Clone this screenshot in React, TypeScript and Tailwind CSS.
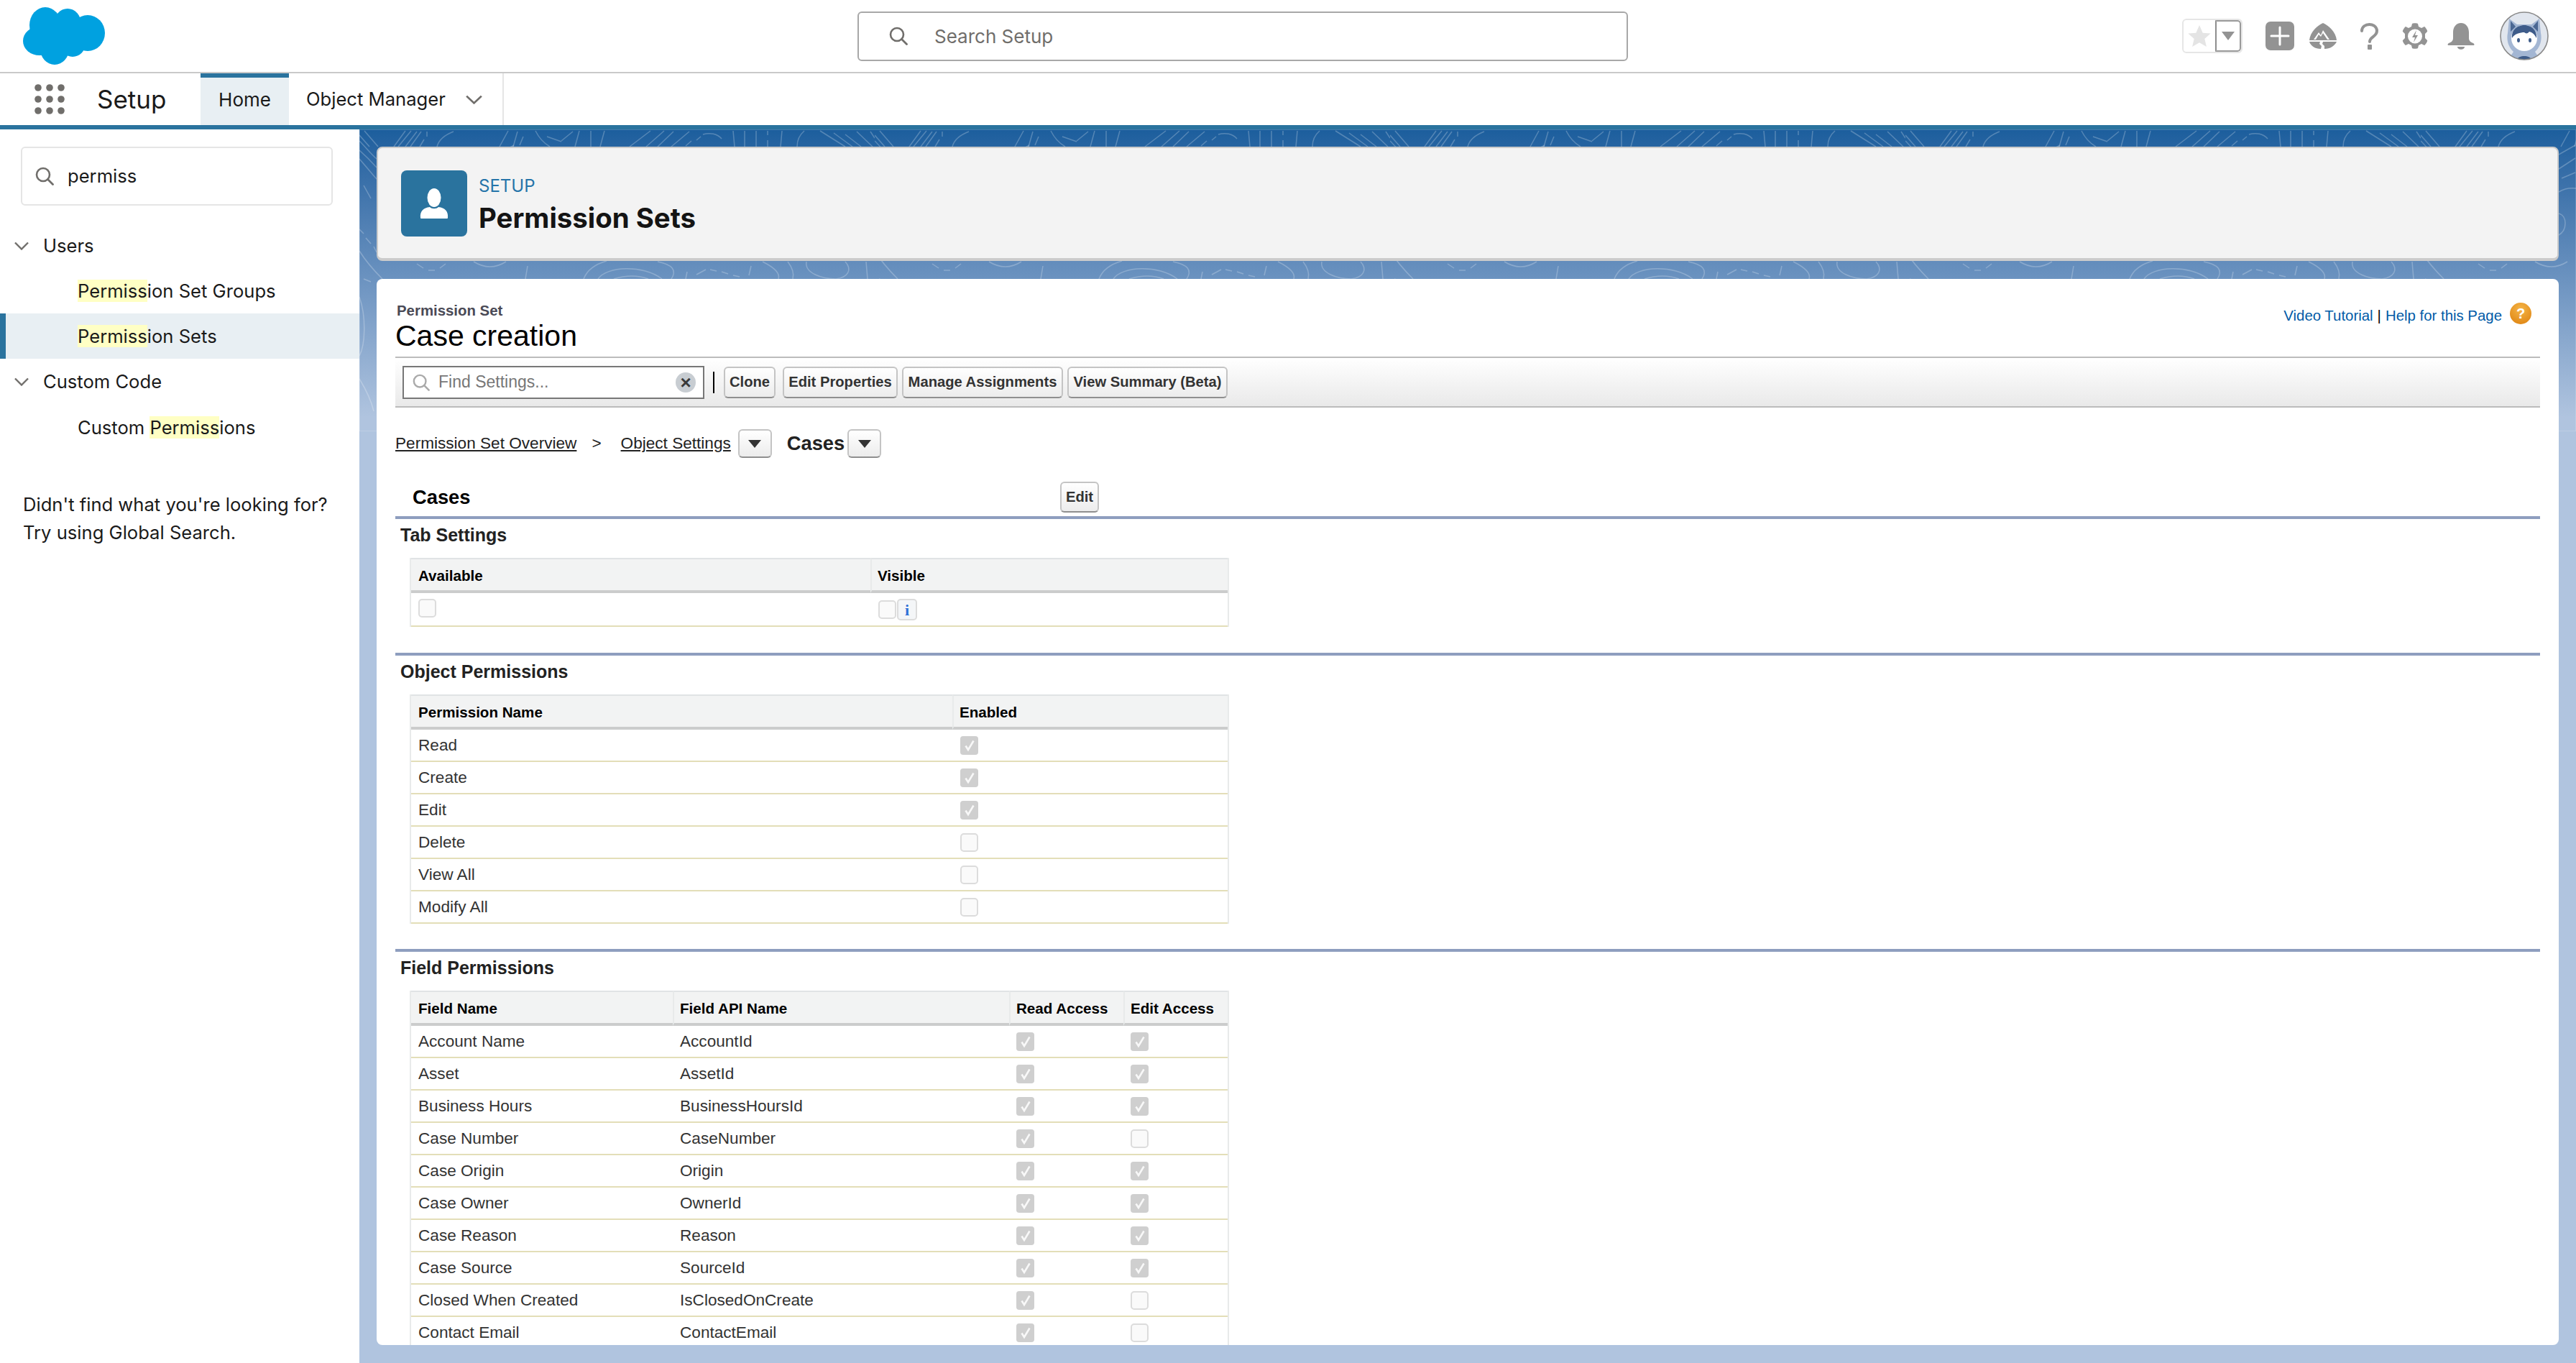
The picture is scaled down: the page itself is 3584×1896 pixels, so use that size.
import React from "react";

const sans = "font-['Inter','Noto_Sans',sans-serif]";
const classic = "font-['Liberation_Sans',Arial,sans-serif]";
const classicBtn =
  "flex items-center justify-center rounded-[6px] border-2 border-[#c4c4c4] border-b-[#8f8f8f] bg-linear-to-b from-white to-[#ececec] font-bold text-[#333] text-[20.2px]";

type Row = { cells: string[]; checks: boolean[] };

const Chev = ({ w = 20, h = 12 }: { w?: number; h?: number }) => (
  <svg width={w} height={h} viewBox="0 0 20 12" preserveAspectRatio="none" fill="none">
    <polyline points="1,1.5 10,10.5 19,1.5" stroke="#706e6b" strokeWidth="2.4" />
  </svg>
);

const SearchIcon = ({ size = 26, color = "#706e6b" }: { size?: number; color?: string }) => (
  <svg width={size} height={size} viewBox="0 0 26 26" fill="none">
    <circle cx="11" cy="11" r="9" stroke={color} strokeWidth="2.6" />
    <line x1="17.5" y1="17.5" x2="24.5" y2="24.5" stroke={color} strokeWidth="2.8" strokeLinecap="round" />
  </svg>
);

const Logo = () => (
  <svg width="114" height="80" viewBox="0 0 114 80" fill="#00a1e0">
    <ellipse cx="31" cy="25" rx="22" ry="25" />
    <ellipse cx="62" cy="23" rx="19" ry="21" />
    <ellipse cx="90" cy="36" rx="24" ry="25" />
    <ellipse cx="23" cy="47" rx="23" ry="20" />
    <ellipse cx="44" cy="58" rx="20" ry="22" />
    <ellipse cx="69" cy="50" rx="18" ry="19" />
    <rect x="25" y="20" width="60" height="35" />
  </svg>
);

const Waffle = () => (
  <svg width="42" height="42" viewBox="0 0 42 42" fill="#706e6b">
    {[5, 21, 37].map((y) =>
      [5, 21, 37].map((x) => <circle key={`${x}-${y}`} cx={x} cy={y} r="4.8" />)
    )}
  </svg>
);

const UserGlyph = () => (
  <svg width="40" height="42" viewBox="0 0 40 42" fill="white">
    <ellipse cx="20" cy="13" rx="9.5" ry="13" />
    <path d="M1 41c-1-9 4-14 13-15 3 3 9 3 12 0 9 1 14 6 13 15 0 1-1 1-2 1H3c-1 0-2 0-2-1z" />
  </svg>
);

const TrailheadIcon = () => (
  <svg width="38" height="36" viewBox="0 0 38 36" fill="#939393">
    <path d="M19 0c9 4 18 13 19 24H0C1 13 10 4 19 0z" />
    <path d="M0 26h15l-1 3 3 3-1 4C8 36 2 32 0 26zM38 26H19l-1 3 3 3v4c8 0 14-4 17-10z" />
    <path d="M6 23l7-10 3 4 3-7 9 13h-3l-6-9-3 5-3-3-4 7z" fill="white" />
  </svg>
);

const GearIcon = () => (
  <svg width="36" height="37" viewBox="0 0 36 37" fill="#939393">
    <path d="M14 1c0-1 8-1 8 0l1 4 4 2 4-2c1 0 5 6 4 7l-3 3v6l3 3c1 1-3 7-4 7l-4-2-4 2-1 4c0 1-8 1-8 0l-1-4-4-2-4 2c-1 0-5-6-4-7l3-3v-6l-3-3C0 11 4 5 5 5l4 2 4-2z" />
    <circle cx="18" cy="18.5" r="10" fill="white" />
    <path d="M20 10l-6 10h4l-2 7 6-10h-4z" />
  </svg>
);

const BellIcon = () => (
  <svg width="38" height="37" viewBox="0 0 38 37" fill="#939393">
    <path d="M19 0c7 0 11 6 11 13v8c0 4 3 6 6 7 2 1 2 3 0 3H2c-2 0-2-2 0-3 3-1 6-3 6-7v-8C8 6 12 0 19 0z" />
    <path d="M14 33h10c0 5-10 5-10 0z" />
  </svg>
);

const Avatar = () => (
  <svg width="68" height="68" viewBox="0 0 68 68">
    <defs>
      <clipPath id="avatar-clip">
        <circle cx="34" cy="34" r="33" />
      </clipPath>
    </defs>
    <circle cx="34" cy="34" r="33" fill="#e1e6ee" />
    <g clipPath="url(#avatar-clip)">
      <path d="M13 10l11 8h20l11-8 2 20c2 10-1 20-8 26l8 12H11l8-12c-7-6-10-16-8-26z" fill="#a3b6d3" />
      <path d="M15 13l7 8-7 7zM53 13l-7 8 7 7z" fill="#4a6793" />
      <circle cx="34" cy="37" r="18" fill="white" />
      <path d="M17 37c-1-12 8-18 17-18s18 6 17 18c-3-6-6-8-10-9-2 3-5 3-7 1-5 0-14 2-17 8z" fill="#3e5c8a" />
      <ellipse cx="26" cy="40" rx="2" ry="3" fill="#3e5c8a" />
      <ellipse cx="42" cy="40" rx="2" ry="3" fill="#3e5c8a" />
      <path d="M24 68c0-8 20-8 20 0z" fill="#3e5c8a" />
    </g>
    <circle cx="34" cy="34" r="33" fill="none" stroke="#8a8a8a" strokeWidth="1.6" />
  </svg>
);

const Check = () => (
  <svg width="18" height="18" viewBox="0 0 18 18" fill="none">
    <path d="M3.500 9.500l3.500 5.500L14.500 2.500" stroke="white" strokeOpacity="0.85" strokeWidth="2.6" />
  </svg>
);

const Box = ({ checked }: { checked: boolean }) => (
  <span
    className={
      checked
        ? "flex h-[26px] w-[25px] items-center justify-center rounded-[4px] bg-[#cfcfcf]"
        : "flex h-[26px] w-[25px] rounded-[5px] border-2 border-[#dcdcdc] bg-[#fafafa]"
    }
  >
    {checked && <Check />}
  </span>
);

// banner contour lines, one tile repeats every 717px
const Contours = () => (
  <svg className="absolute left-0 top-0 h-[420px] w-full" fill="none" stroke="white" strokeOpacity="0.24" strokeWidth="1.5">
    <defs>
      <pattern id="contour-tile" width="717" height="420" patternUnits="userSpaceOnUse">
        <path d="M7 2L26 24M0 8L14 24M64 2L48 24M72 2L54 24M80 3L64 24M86 3L71 24M94 3v7M90 14L84 24M131 3C118 8 110 16 108 24" />
        <path d="M207 2L195 24M220 3L214 24M228 10L223 22M245 2C250 12 258 20 265 24M261 10L281 17M297 3L281 16M306 2L300 24M322 2v22M341 2L335 24" />
        <path d="M405 2L376 24M424 2L399 24M437 3L415 24M459 3L434 24M475 10L469 15M478 7C488 4 498 6 504 13M462 16L454 23" />
        <path d="M520 2L522 24M536 2v22M552 2v22M568 2v6M568 15v9M588 2L586 24M619 2C612 8 609 16 609 24" />
        <path d="M641 2L676 24M660 5L686 24M676 7L698 24M692 3L714 24M711 3L717 12" />
        <path d="M0 16C8 24 16 34 24 41M0 29C8 36 16 44 24 53M0 41C8 50 16 60 24 69M6 78L16 96M0 139L6 145M9 151L16 159M20 163L24 171M0 169C8 182 16 192 32 208M6 208L16 212M0 233C10 262 8 300 0 315M0 347C8 360 16 375 20 392" />
        <path d="M192 35L215 22M192 55L215 40M196 68L215 60M192 87C200 82 208 81 216 82M192 117C204 120 204 140 192 147" />
        <path d="M80 187L89 193M96 196L105 196M112 193L120 187M159 184Q182 198 204 184M234 190L231 208" />
        <path d="M312 208Q319 190 344 183M332 208C344 190 395 188 421 208M354 208Q380 200 402 208M415 184Q446 190 434 208" />
        <path d="M456 198L454 208M469 202L482 195M488 195L497 197M504 198L513 201M520 203L529 205M542 203L545 190" />
        <path d="M561 184Q587 197 583 208M596 184Q606 197 603 208M622 184C619 200 644 208 663 208C680 206 686 195 676 184M705 184L707 208" />
      </pattern>
    </defs>
    <rect width="100%" height="100%" fill="url(#contour-tile)" />
  </svg>
);

const Highlight = ({ children }: { children: React.ReactNode }) => (
  <mark className="bg-[#ffffc4] text-inherit">{children}</mark>
);

const SectionRule = () => <div className="h-[4px] bg-[#8e9ebf]" />;

const SectionTitle = ({ children }: { children: React.ReactNode }) => (
  <div className="flex h-[44px] items-center pl-[7px] pt-[1px] text-[25px] font-bold text-[#222]">{children}</div>
);

const DataTable = ({
  widths,
  head,
  rows = [],
  boxInset = "pl-[10px]",
  children,
}: {
  widths: number[];
  head: string[];
  rows?: Row[];
  boxInset?: string;
  children?: React.ReactNode;
}) => (
  <div className="ml-[20px] mt-[10px] w-[1140px] border-x-2 border-[#e8eaea]">
    <table className="w-full table-fixed border-separate border-spacing-0">
      <colgroup>
        {widths.map((w, i) => (
          <col key={i} style={{ width: w }} />
        ))}
      </colgroup>
      <thead>
        <tr>
          {head.map((h, i) => (
            <th
              key={h}
              className={
                i === 0
                  ? "h-[49px] border-t-2 border-b-4 border-t-[#e0e3e5] border-b-[#cbcccc] bg-[#f2f3f3] pl-[10px] pt-[3px] text-left text-[20.6px] font-bold text-black"
                  : "h-[49px] border-t-2 border-b-4 border-l-2 border-t-[#e0e3e5] border-b-[#cbcccc] border-l-[#e8eaea] bg-[#f2f3f3] pl-[8px] pt-[3px] text-left text-[20.6px] font-bold text-black"
              }
            >
              {h}
            </th>
          ))}
        </tr>
      </thead>
      <tbody>
        {children}
        {rows.map((r) => (
          <tr key={r.cells[0]}>
            {r.cells.map((c, i) => (
              <td key={i} className="h-[45px] border-b-2 border-[#e3deb8] pl-[10px] text-[22.6px] text-[#333]">
                {c}
              </td>
            ))}
            {r.checks.map((c, i) => (
              <td key={i} className={`h-[45px] border-b-2 border-[#e3deb8] ${boxInset}`}>
                <Box checked={c} />
              </td>
            ))}
          </tr>
        ))}
      </tbody>
    </table>
  </div>
);

const objectRows: Row[] = [
  { cells: ["Read"], checks: [true] },
  { cells: ["Create"], checks: [true] },
  { cells: ["Edit"], checks: [true] },
  { cells: ["Delete"], checks: [false] },
  { cells: ["View All"], checks: [false] },
  { cells: ["Modify All"], checks: [false] },
];

const fieldRows: Row[] = [
  { cells: ["Account Name", "AccountId"], checks: [true, true] },
  { cells: ["Asset", "AssetId"], checks: [true, true] },
  { cells: ["Business Hours", "BusinessHoursId"], checks: [true, true] },
  { cells: ["Case Number", "CaseNumber"], checks: [true, false] },
  { cells: ["Case Origin", "Origin"], checks: [true, true] },
  { cells: ["Case Owner", "OwnerId"], checks: [true, true] },
  { cells: ["Case Reason", "Reason"], checks: [true, true] },
  { cells: ["Case Source", "SourceId"], checks: [true, true] },
  { cells: ["Closed When Created", "IsClosedOnCreate"], checks: [true, false] },
  { cells: ["Contact Email", "ContactEmail"], checks: [true, false] },
];

const DropBtn = () => (
  <button className={`${classicBtn} h-[40px] w-[47px]`}>
    <span className="h-0 w-0 border-x-[9px] border-t-[11px] border-x-transparent border-t-[#333]" />
  </button>
);

const TopBar = () => (
  <header className={`flex h-[102px] items-center border-b-2 border-[#c9c9c9] pl-[32px] ${sans}`}>
    <Logo />
    <div className="ml-[1047px] flex h-[69px] w-[1072px] items-center rounded-[6px] border-2 border-[#a8a8a8] pl-[42px]">
      <SearchIcon size={26} />
      <span className="ml-[37px] text-[26px] text-[#706e6b]">Search Setup</span>
    </div>
    <div className="ml-auto flex items-center pr-[38px]">
      <div className="flex h-[48px] w-[84px] overflow-hidden rounded-[6px] border-2 border-[#e6e6e6]">
        <div className="flex flex-1 items-center justify-center">
          <svg width="32" height="30" viewBox="0 0 24 23" fill="#e4e4e4">
            <path d="M12 0l3.6 8.2 8.4.7-6.4 5.7 2 8.4L12 18.500 4.400 23l2-8.400L0 8.900l8.400-.700z" />
          </svg>
        </div>
        <div className="flex w-[36px] items-center justify-center rounded-r-[5px] border-2 border-y-[#9a9a9a] border-l-[#8e8e8e] border-r-[#9a9a9a]">
          <span className="h-0 w-0 border-x-[9px] border-t-[12px] border-x-transparent border-t-[#939393]" />
        </div>
      </div>
      <div className="ml-[32px] flex h-[40px] w-[40px] items-center justify-center rounded-[7px] bg-[#939393]">
        <svg width="28" height="28" viewBox="0 0 28 28" stroke="white" strokeWidth="3" strokeLinecap="round">
          <line x1="14" y1="2" x2="14" y2="26" />
          <line x1="2" y1="14" x2="26" y2="14" />
        </svg>
      </div>
      <div className="ml-[21px]">
        <TrailheadIcon />
      </div>
      <svg className="ml-[33px]" width="25" height="37" viewBox="0 0 25 37" fill="none">
        <path d="M2 11c0-12 21-12 21 0 0 8-10 8-10 15" stroke="#939393" strokeWidth="4" strokeLinecap="round" />
        <rect x="10" y="30" width="6" height="7" rx="1" fill="#939393" />
      </svg>
      <div className="ml-[33px]">
        <GearIcon />
      </div>
      <div className="ml-[27px]">
        <BellIcon />
      </div>
      <div className="ml-[35px]">
        <Avatar />
      </div>
    </div>
  </header>
);

const NavBar = () => (
  <nav className={`flex h-[78px] items-stretch border-b-[6px] border-[#2a739e] pl-[48px] ${sans}`}>
    <div className="flex items-center">
      <Waffle />
    </div>
    <div className="ml-[45px] flex w-[144px] items-center text-[35px] text-[#1a1a1a]">Setup</div>
    <div className="flex w-[123px] items-center justify-center border-t-[6px] border-[#2a739e] bg-[#e8eff3] pb-[6px] text-[26px] text-[#1a1a1a]">
      Home
    </div>
    <div className="flex w-[299px] items-center border-r-2 border-[#e5e5e5] pl-[24px] text-[25.6px] text-[#1a1a1a]">
      <span>Object Manager</span>
      <span className="ml-[28px]">
        <Chev w={23} h={13} />
      </span>
    </div>
  </nav>
);

const Sidebar = () => (
  <aside className={`w-[500px] shrink-0 bg-white pt-[24px] text-[25.6px] text-[#1a1a1a] ${sans}`}>
    <div className="mx-[29px] flex h-[82px] w-[434px] items-center rounded-[6px] border-2 border-[#e5e5e5] pl-[18px]">
      <SearchIcon size={26} />
      <span className="ml-[19px] pt-[1px]">permiss</span>
    </div>
    <div className="mt-[31px] flex h-[50px] items-center pl-[20px]">
      <Chev />
      <span className="ml-[20px]">Users</span>
    </div>
    <div className="mt-[6px] flex h-[63px] items-center pl-[108px] pt-[2px]">
      <span>
        <Highlight>Permiss</Highlight>ion Set Groups
      </span>
    </div>
    <div className="flex h-[63px] items-center border-l-8 border-[#2a739e] bg-[#e8eff3] pl-[100px] pt-[2px]">
      <span>
        <Highlight>Permiss</Highlight>ion Sets
      </span>
    </div>
    <div className="mt-[7px] flex h-[50px] items-center pl-[20px]">
      <Chev />
      <span className="ml-[20px]">Custom Code</span>
    </div>
    <div className="mt-[7px] flex h-[63px] items-center pl-[108px] pt-[1px]">
      <span>
        Custom <Highlight>Permiss</Highlight>ions
      </span>
    </div>
    <p className="mt-[56px] pl-[32px] leading-[39px]">
      Didn't find what you're looking for?
      <br />
      Try using Global Search.
    </p>
  </aside>
);

const PageHeader = () => (
  <div className={`relative flex h-[159px] items-center rounded-[8px] border-2 border-b-[4px] border-[#cbcbcb] bg-[#f3f3f3] pl-[32px] ${sans}`}>
    <div className="flex h-[92px] w-[92px] items-center justify-center rounded-[8px] bg-[#2a739e]">
      <UserGlyph />
    </div>
    <div className="ml-[16px] pt-[5px]">
      <div className="text-[24px] leading-[30px] text-[#2574a9]">SETUP</div>
      <div className="mt-[5px] text-[38.4px] font-bold leading-[48px] text-[#141414]">Permission Sets</div>
    </div>
  </div>
);

export default function App() {
  return (
    <div className="flex h-[1896px] flex-col overflow-hidden bg-white">
      <TopBar />
      <NavBar />
      <div className="flex min-h-0 flex-1">
        <Sidebar />
        <main className="relative flex min-w-0 flex-1 flex-col overflow-hidden bg-[#b0c4df] px-[24px] pb-[25px] pt-[24px]">
          <div className="absolute left-0 right-0 top-0 h-[400px] bg-linear-to-b from-[#1b5e9d] to-[#b0c4df]" />
          <Contours />
          <div className="relative">
            <PageHeader />
          </div>
          <div className={`relative mt-[25px] min-h-0 flex-1 overflow-hidden rounded-[8px] bg-white px-[26px] ${classic}`}>
            <div className="relative h-[108px]">
              <div className="pl-[2px] pt-[32px] text-[20.4px] font-bold leading-[24px] text-[#4a4a56]">Permission Set</div>
              <div className="text-[41px] leading-[46px] text-black">Case creation</div>
              <div className="absolute right-[12px] top-[30px] flex items-center text-[20.4px] text-[#015ba7]">
                <span className="pt-[6px]">Video Tutorial</span>
                <span className="mx-[6px] pt-[6px] text-black">|</span>
                <span className="pt-[6px]">Help for this Page</span>
                <span className="ml-[11px] flex h-[30px] w-[30px] items-center justify-center rounded-full bg-[radial-gradient(circle_at_50%_30%,#f5b547,#dc7f0c)] text-[20px] font-bold text-white">
                  ?
                </span>
              </div>
            </div>
            <div className="flex h-[71px] items-center border-y-2 border-[#bcbcbc] bg-linear-to-b from-white to-[#e9e9e9] pl-[10px]">
              <div className="flex h-[46px] w-[420px] items-center border-2 border-[#777] bg-white pl-[12px]">
                <SearchIcon size={24} color="#aaaaaa" />
                <span className="ml-[12px] text-[23px] text-[#777]">Find Settings...</span>
                <span className="ml-auto mr-[10px] flex h-[28px] w-[28px] items-center justify-center rounded-full bg-[#c8cdd2] text-[26px] font-bold leading-none text-[#3a3a3a]">
                  ×
                </span>
              </div>
              <div className="ml-[12px] h-[30px] w-[2px] bg-black" />
              <button className={`${classicBtn} ml-[13px] h-[44px] w-[72px]`}>Clone</button>
              <button className={`${classicBtn} ml-[10px] h-[44px] w-[160px]`}>Edit Properties</button>
              <button className={`${classicBtn} ml-[6px] h-[44px] w-[224px]`}>Manage Assignments</button>
              <button className={`${classicBtn} ml-[6px] h-[44px] w-[223px]`}>View Summary (Beta)</button>
            </div>
            <div className="mt-[30px] flex h-[40px] items-center text-[#222]">
              <span className="text-[22.6px] underline">Permission Set Overview</span>
              <span className="ml-[21px] text-[22.6px]">&gt;</span>
              <span className="ml-[27px] text-[22.6px] underline">Object Settings</span>
              <span className="ml-[10px]">
                <DropBtn />
              </span>
              <span className="ml-[21px] text-[27.3px] font-bold">Cases</span>
              <span className="ml-[4px]">
                <DropBtn />
              </span>
            </div>
            <div className="mt-[33px] flex h-[43px] items-center">
              <span className="ml-[24px] w-[901px] pt-[2px] text-[27.3px] font-bold text-black">Cases</span>
              <button className={`${classicBtn} h-[43px] w-[54px]`}>Edit</button>
            </div>
            <div className="mt-[5px]">
              <SectionRule />
            </div>
            <SectionTitle>Tab Settings</SectionTitle>
            <DataTable widths={[639, 497]} head={["Available", "Visible"]}>
              <tr>
                <td className="h-[47px] border-b-2 border-[#e3deb8] pl-[10px] pt-[8px] align-top">
                  <Box checked={false} />
                </td>
                <td className="h-[47px] border-b-2 border-[#e3deb8] pl-[11px] pt-[8px] align-top">
                  <div className="flex items-center">
                    <Box checked={false} />
                    <span className="ml-[1px] flex h-[30px] w-[28px] items-center justify-center rounded-[5px] border-2 border-[#dcdcdc] bg-[#f4f6f8] font-['Liberation_Serif',serif] text-[22px] font-bold text-[#2f6fd6]">
                      i
                    </span>
                  </div>
                </td>
              </tr>
            </DataTable>
            <div className="mt-[36px]">
              <SectionRule />
            </div>
            <SectionTitle>Object Permissions</SectionTitle>
            <DataTable widths={[753, 383]} head={["Permission Name", "Enabled"]} rows={objectRows} boxInset="pl-[11px]" />
            <div className="mt-[35px]">
              <SectionRule />
            </div>
            <SectionTitle>Field Permissions</SectionTitle>
            <DataTable
              widths={[364, 468, 159, 145]}
              head={["Field Name", "Field API Name", "Read Access", "Edit Access"]}
              rows={fieldRows}
            />
          </div>
        </main>
      </div>
    </div>
  );
}
